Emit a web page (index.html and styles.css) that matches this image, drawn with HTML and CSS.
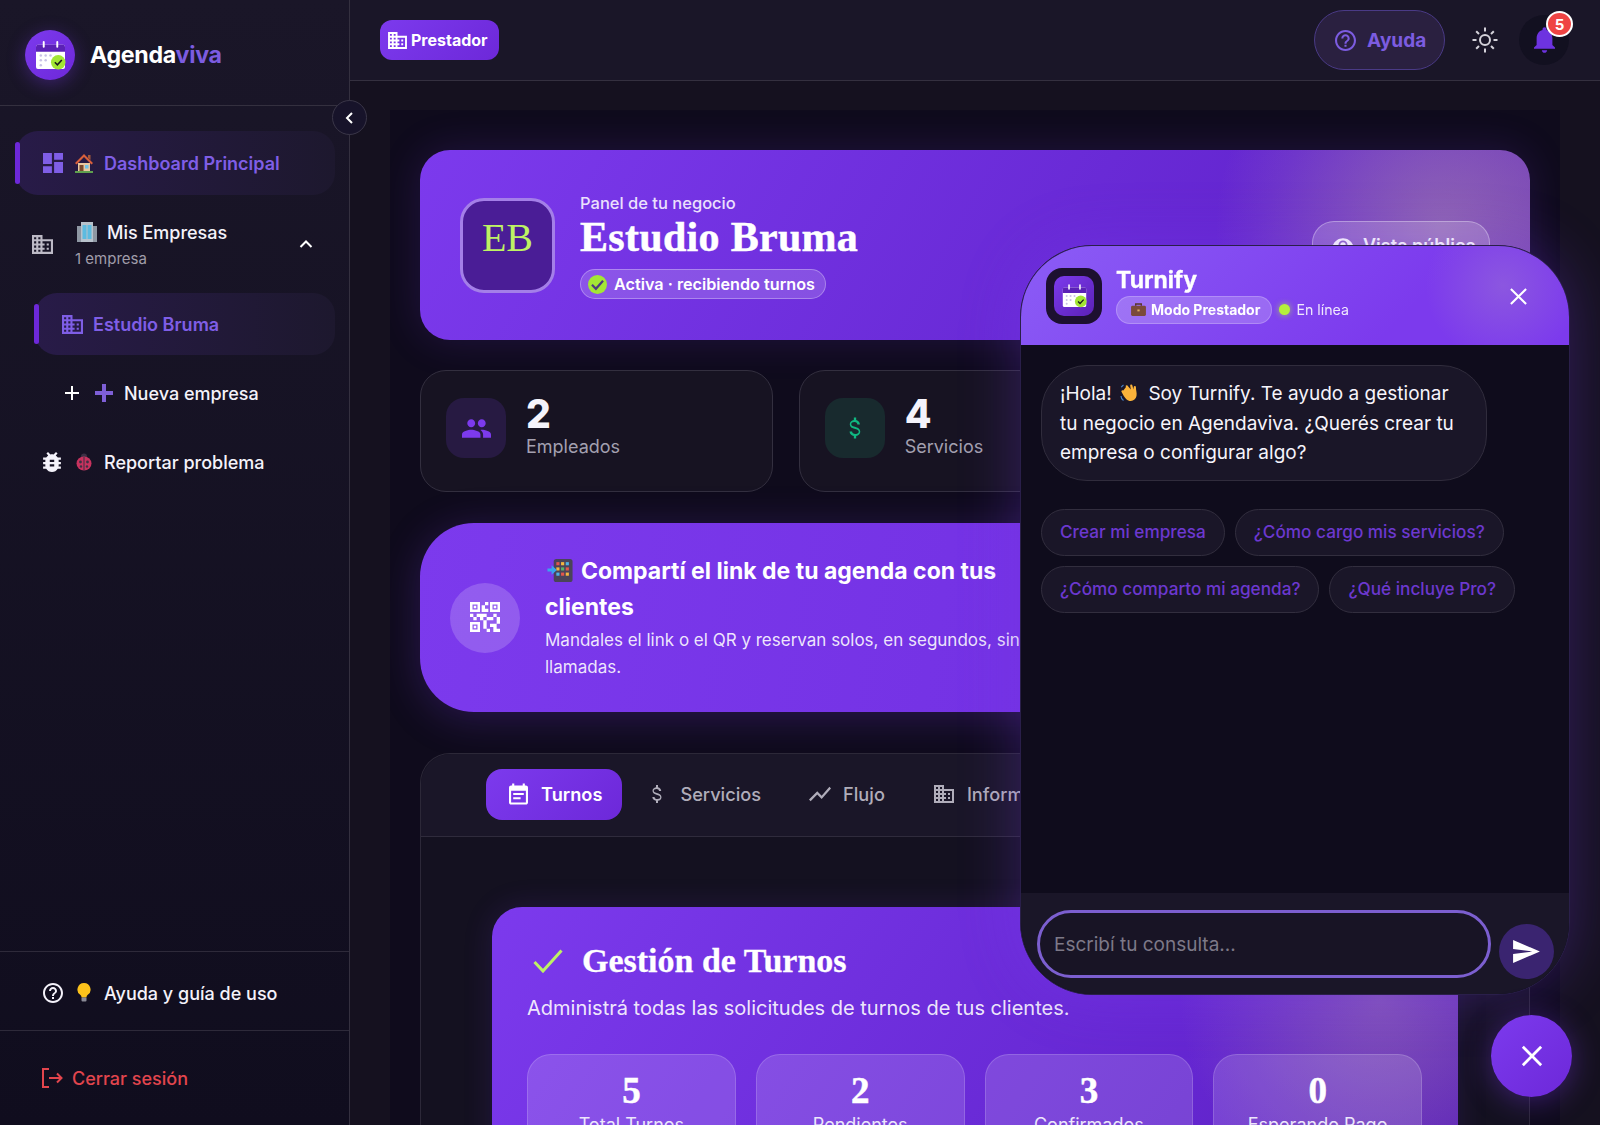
FILE: index.html
```html
<!DOCTYPE html>
<html lang="es">
<head>
<meta charset="utf-8">
<title>Agendaviva</title>
<link rel="stylesheet" href="styles.css">
</head>
<body>
<svg class="defs" width="0" height="0" aria-hidden="true">
  <symbol id="i-logo" viewBox="0 0 32 30">
    <rect x="1" y="4" width="30" height="25" rx="2" fill="#fff"/>
    <path d="M1 6a2 2 0 0 1 2-2h26a2 2 0 0 1 2 2v5H1z" fill="#5b21b6"/>
    <rect x="8" y="0" width="2" height="7" rx="1" fill="#fff"/>
    <rect x="22" y="0" width="2" height="7" rx="1" fill="#fff"/>
    <g fill="#c9c2e6"><circle cx="6" cy="15" r="1.3"/><circle cx="11" cy="15" r="1.3"/><circle cx="16" cy="15" r="1.3"/><circle cx="6" cy="20" r="1.3"/><circle cx="11" cy="20" r="1.3"/><circle cx="6" cy="25" r="1.3"/></g>
    <circle cx="24" cy="22" r="7.5" fill="#a3e635"/>
    <path d="M20.5 22l2.6 2.6 4.6-5" fill="none" stroke="#1a1a1a" stroke-width="1.6"/>
  </symbol>
  <symbol id="i-dash" viewBox="3 3 18 18"><path d="M3 13h8V3H3v10zm0 8h8v-6H3v6zm10 0h8V11h-8v10zm0-18v6h8V3h-8z"/></symbol>
  <symbol id="i-domain" viewBox="2 3 20 18"><path d="M12 7V3H2v18h20V7H12zM6 19H4v-2h2v2zm0-4H4v-2h2v2zm0-4H4V9h2v2zm0-4H4V5h2v2zm4 12H8v-2h2v2zm0-4H8v-2h2v2zm0-4H8V9h2v2zm0-4H8V5h2v2zm10 12h-8v-2h2v-2h-2v-2h2v-2h-2V9h8v10zm-2-8h-2v2h2v-2zm0 4h-2v2h2v-2z"/></symbol>
  <symbol id="i-bug" viewBox="4 3 16 18"><path d="M20 8h-2.81c-.45-.78-1.07-1.45-1.82-1.96L17 4.41 15.59 3l-2.17 2.17C12.96 5.06 12.49 5 12 5c-.49 0-.96.06-1.41.17L8.41 3 7 4.41l1.62 1.63C7.88 6.55 7.26 7.22 6.81 8H4v2h2.09c-.05.33-.09.66-.09 1v1H4v2h2v1c0 .34.04.67.09 1H4v2h2.81c1.04 1.79 2.97 3 5.19 3s4.15-1.21 5.19-3H20v-2h-2.09c.05-.33.09-.66.09-1v-1h2v-2h-2v-1c0-.34-.04-.67-.09-1H20V8zm-6 8h-4v-2h4v2zm0-4h-4v-2h4v2z"/></symbol>
  <symbol id="i-help" viewBox="2 2 20 20"><path d="M11 18h2v-2h-2v2zm1-16C6.48 2 2 6.48 2 12s4.48 10 10 10 10-4.48 10-10S17.52 2 12 2zm0 18c-4.41 0-8-3.59-8-8s3.59-8 8-8 8 3.59 8 8-3.59 8-8 8zm0-14c-2.21 0-4 1.79-4 4h2c0-1.1.9-2 2-2s2 .9 2 2c0 2-3 1.75-3 5h2c0-2.25 3-2.5 3-5 0-2.21-1.79-4-4-4z"/></symbol>
  <symbol id="i-group" viewBox="1 5 22 14"><path d="M16 11c1.66 0 2.99-1.34 2.99-3S17.66 5 16 5c-1.66 0-3 1.34-3 3s1.34 3 3 3zm-8 0c1.66 0 2.99-1.34 2.99-3S9.66 5 8 5C6.34 5 5 6.34 5 8s1.34 3 3 3zm0 2c-2.33 0-7 1.17-7 3.5V19h14v-2.5c0-2.33-4.67-3.5-7-3.5zm8 0c-.29 0-.62.02-.97.05 1.16.84 1.97 1.97 1.97 3.45V19h6v-2.5c0-2.33-4.67-3.5-7-3.5z"/></symbol>
  <symbol id="i-money" viewBox="6 3 12 18"><path d="M11.8 10.9c-2.27-.59-3-1.2-3-2.15 0-1.09 1.01-1.85 2.7-1.85 1.78 0 2.44.85 2.5 2.1h2.21c-.07-1.72-1.12-3.3-3.21-3.81V3h-2v2.16c-1.94.42-3.5 1.68-3.5 3.61 0 2.31 1.91 3.46 4.7 4.13 2.5.6 3 1.48 3 2.41 0 .69-.49 1.79-2.7 1.79-2.06 0-2.87-.92-2.98-2.1h-2.2c.12 2.19 1.76 3.42 3.68 3.83V21h2v-2.15c1.95-.37 3.5-1.5 3.5-3.55 0-2.84-2.43-3.81-4.7-4.4z"/></symbol>
  <symbol id="i-event" viewBox="3 1 18 20"><path d="M17 10H7v2h10v-2zm2-7h-1V1h-2v2H8V1H6v2H5c-1.11 0-1.99.9-1.99 2L3 19c0 1.1.89 2 2 2h14c1.1 0 2-.9 2-2V5c0-1.1-.9-2-2-2zm0 16H5V8h14v11zm-5-5H7v2h7v-2z"/></symbol>
  <symbol id="i-chart" viewBox="2 5 20 14"><path d="M3.5 18.49l6-6.01 4 4L22 6.92l-1.41-1.41-7.09 7.97-4-4L2 16.99z"/></symbol>
  <symbol id="i-qr" viewBox="3 3 18 18"><path d="M15 21h-2v-2h2v2zm-2-7h-2v5h2v-5zm8-2h-2v4h2v-4zm-2-2h-2v2h2v-2zM7 12H5v2h2v-2zm-2-2H3v2h2v-2zm7-5h2V3h-2v2zm-7.5-.5v3h3v-3h-3zM9 9H3V3h6v6zm-4.5 7.5v3h3v-3h-3zM9 21H3v-6h6v6zm7.5-16.5v3h3v-3h-3zM21 9h-6V3h6v6zm-2 10v-3h-4v2h2v3h4v-2h-2zm-2-7h-4v2h4v-2zm-4-2H7v2h2v2h2v-2h2v-2zm1-1V7h-2V5h-2v4h4zM6.75 5.25h-1.5v1.5h1.5v-1.5zm0 12h-1.5v1.5h1.5v-1.5zm12-12h-1.5v1.5h1.5v-1.5z"/></symbol>
  <symbol id="i-bell" viewBox="4 2.5 16 19.5"><path d="M12 22c1.1 0 2-.9 2-2h-4c0 1.1.9 2 2 2zm6-6v-5c0-3.07-1.63-5.64-4.5-6.32V4c0-.83-.67-1.5-1.5-1.5s-1.5.67-1.5 1.5v.68C7.64 5.36 6 7.92 6 11v5l-2 2v1h16v-1l-2-2z"/></symbol>
  <symbol id="i-send" viewBox="2 3 21 18"><path d="M2.01 21L23 12 2.01 3 2 10l15 2-15 2z"/></symbol>
  <symbol id="i-eye" viewBox="1 4.5 22 15"><path d="M12 4.5C7 4.5 2.73 7.61 1 12c1.73 4.39 6 7.5 11 7.5s9.27-3.11 11-7.5c-1.73-4.39-6-7.5-11-7.5zM12 17a5 5 0 1 1 0-10 5 5 0 0 1 0 10zm0-8a3 3 0 1 0 0 6 3 3 0 0 0 0-6z"/></symbol>
  <symbol id="e-house" viewBox="0 0 20 20"><path d="M4 10h12v9H4z" fill="#e8c9a0"/><path d="M10 1L1 10l1.500 1.500L10 4l7.500 7.500L19 10z" fill="#d9603b"/><path d="M14 2h2.500v5L14 5z" fill="#a1583a"/><rect x="5.500" y="12" width="4" height="7" fill="#7a4a2c"/><rect x="11" y="12" width="3.500" height="3.500" fill="#6fc3e6"/><rect x="1" y="18" width="18" height="2" fill="#5fa04e"/></symbol>
  <symbol id="e-office" viewBox="0 0 20 20"><rect x="0" y="4" width="20" height="16" fill="#8e97a3"/><rect x="4" y="0" width="12" height="20" fill="#b8c2cc"/><g fill="#5dbbe0"><rect x="5.500" y="3" width="4" height="14"/><rect x="10.500" y="3" width="4" height="14"/></g></symbol>
  <symbol id="e-plus" viewBox="0 0 18 18"><path d="M7 0h4v7h7v4h-7v7H7v-7H0V7h7z" fill="#7e5fd6"/></symbol>
  <symbol id="e-bug" viewBox="0 0 18 18"><circle cx="9" cy="3.500" r="3" fill="#3c3044"/><ellipse cx="9" cy="10.500" rx="7.500" ry="7" fill="#c8325e"/><path d="M9 4v13.500" stroke="#3c3044" stroke-width="1"/><circle cx="5.500" cy="9" r="1.400" fill="#3c3044"/><circle cx="12.500" cy="9" r="1.400" fill="#3c3044"/><circle cx="6" cy="13.500" r="1.200" fill="#3c3044"/><circle cx="12" cy="13.500" r="1.200" fill="#3c3044"/></symbol>
  <symbol id="e-bulb" viewBox="0 0 14 20"><path d="M7 0a6.500 6.500 0 0 0-3.500 12c.7.6 1 1.500 1 2.500h5c0-1 .3-1.900 1-2.500A6.500 6.500 0 0 0 7 0z" fill="#fcc21b"/><rect x="4.500" y="14.500" width="5" height="4" rx="1" fill="#8a8a96"/></symbol>
  <symbol id="e-phone" viewBox="0 0 24 22"><rect x="6" y="0" width="18" height="22" rx="2.500" fill="#4a4458"/><g><rect x="8.500" y="3" width="3" height="3" fill="#e2574c"/><rect x="13" y="3" width="3" height="3" fill="#f4b73f"/><rect x="17.500" y="3" width="3" height="3" fill="#4fb2e5"/><rect x="8.500" y="8" width="3" height="3" fill="#f4b73f"/><rect x="13" y="8" width="3" height="3" fill="#58b368"/><rect x="17.500" y="8" width="3" height="3" fill="#e2574c"/><rect x="8.500" y="13" width="3" height="3" fill="#4fb2e5"/><rect x="13" y="13" width="3" height="3" fill="#e2574c"/><rect x="17.500" y="13" width="3" height="3" fill="#f4b73f"/></g><path d="M0 9h4V6l5 4.500L4 15v-3H0z" fill="#39a5ee"/></symbol>
  <symbol id="e-wave" viewBox="0 0 20 20"><path d="M6 4c-1-1.300.6-2.400 1.600-1.300l3.200 3.700-.6-3.600c-.2-1.500 1.900-1.800 2.200-.3l1 4 .3-2.600c.2-1.400 2.200-1.200 2.200.2 0 3.500 1.200 6 .6 9-.7 3.400-3.700 5.600-7 4.800-2.500-.6-4-2.700-5.700-5L1.600 8.900C.8 7.800 2.300 6.600 3.300 7.500z" fill="#fbb33a"/><path d="M1 13c0 2 1 3.500 2.500 4.500M3.500 2C2.500 2.600 1.800 3.300 1.300 4.300" fill="none" stroke="#4680c8" stroke-width="1.200"/></symbol>
  <symbol id="e-case" viewBox="0 0 16 14"><rect x="0" y="3" width="16" height="11" rx="1.500" fill="#7a4a3a"/><path d="M5 3V1h6v2" fill="none" stroke="#5a3428" stroke-width="1.500"/><rect x="6.800" y="7" width="2.400" height="2" fill="#e0b060"/></symbol>
</svg>

<div class="app">
  <aside class="sidebar">
    <div class="brand">
      <span class="brand-mark"><svg class="brand-cal"><use href="#i-logo"/></svg></span>
      <span class="brand-name">Agenda<span class="brand-accent">viva</span></span>
    </div>
    <button class="collapse" aria-label="Contraer"><svg viewBox="0 0 14 14" class="collapse-icon"><path d="M9 2L4 7l5 5"/></svg></button>
    <nav class="nav">
      <a class="nav-item active">
        <svg class="ic ic-20"><use href="#i-dash"/></svg>
        <svg class="em"><use href="#e-house"/></svg>
        <span>Dashboard Principal</span>
      </a>
      <div class="nav-group">
        <svg class="ic ic-group"><use href="#i-domain"/></svg>
        <div class="group-text">
          <div class="group-title"><svg class="em"><use href="#e-office"/></svg><span>Mis Empresas</span></div>
          <div class="group-sub">1 empresa</div>
        </div>
        <svg viewBox="0 0 14 10" class="chev"><path d="M1.500 8L7 2.500 12.500 8"/></svg>
      </div>
      <a class="nav-item sub active">
        <svg class="ic ic-domain"><use href="#i-domain"/></svg>
        <span>Estudio Bruma</span>
      </a>
      <a class="nav-item add">
        <svg viewBox="0 0 16 16" class="plus"><path d="M8 1v14M1 8h14"/></svg>
        <svg class="em em-plus"><use href="#e-plus"/></svg>
        <span>Nueva empresa</span>
      </a>
      <a class="nav-item report">
        <svg class="ic ic-bug"><use href="#i-bug"/></svg>
        <svg class="em"><use href="#e-bug"/></svg>
        <span>Reportar problema</span>
      </a>
    </nav>
    <div class="side-foot">
      <a class="nav-item foot-help">
        <svg class="ic ic-20"><use href="#i-help"/></svg>
        <svg class="em"><use href="#e-bulb"/></svg>
        <span>Ayuda y guía de uso</span>
      </a>
      <a class="logout">
        <svg viewBox="0 0 22 22" class="logout-icon"><path d="M8 2H2v18h6M8 11h12.500M16 6.500l4.500 4.500-4.500 4.500"/></svg>
        <span>Cerrar sesión</span>
      </a>
    </div>
  </aside>

  <main class="main">
    <header class="topbar">
      <span class="role"><svg class="ic ic-role"><use href="#i-domain"/></svg>Prestador</span>
      <div class="top-actions">
        <button class="help-pill"><svg class="ic ic-help"><use href="#i-help"/></svg>Ayuda</button>
        <button class="sun" aria-label="Tema">
          <svg viewBox="0 0 28 28" class="sun-icon"><circle cx="14" cy="14" r="5"/><path d="M14 1.500v4M14 22.500v4M1.500 14h4M22.500 14h4M5.200 5.200l2.800 2.800M20 20l2.800 2.800M5.200 22.800L8 20M20 8l2.800-2.800"/></svg>
        </button>
        <button class="bell" aria-label="Notificaciones">
          <svg class="ic ic-bell"><use href="#i-bell"/></svg>
          <span class="badge">5</span>
        </button>
      </div>
    </header>

    <div class="content">
      <div class="inner">
        <section class="hero">
          <div class="hero-left">
            <div class="avatar">EB</div>
            <div class="hero-text">
              <div class="hero-kicker">Panel de tu negocio</div>
              <h1 class="hero-title">Estudio Bruma</h1>
              <span class="status">
                <span class="status-check"><svg viewBox="0 0 12 12"><path d="M2.500 6.200L5 8.700l4.500-5"/></svg></span>
                Activa · recibiendo turnos
              </span>
            </div>
          </div>
          <button class="public"><svg class="ic ic-eye"><use href="#i-eye"/></svg>Vista pública</button>
        </section>

        <section class="stats">
          <div class="stat">
            <span class="stat-icon violet"><svg class="ic ic-people"><use href="#i-group"/></svg></span>
            <div><div class="stat-num">2</div><div class="stat-label">Empleados</div></div>
          </div>
          <div class="stat">
            <span class="stat-icon green"><svg class="ic ic-money"><use href="#i-money"/></svg></span>
            <div><div class="stat-num">4</div><div class="stat-label">Servicios</div></div>
          </div>
          <div class="stat"></div>
        </section>

        <section class="share">
          <span class="qr"><svg class="ic ic-qr"><use href="#i-qr"/></svg></span>
          <div class="share-text">
            <h2 class="share-title"><svg class="em-phone"><use href="#e-phone"/></svg>Compartí el link de tu agenda con tus clientes</h2>
            <p class="share-sub">Mandales el link o el QR y reservan solos, en segundos, sin llamadas.</p>
          </div>
        </section>

        <section class="panel">
          <div class="tabs">
            <a class="tab on"><svg class="ic ic-tab-event"><use href="#i-event"/></svg>Turnos</a>
            <a class="tab tab-money"><svg class="ic ic-tab-money"><use href="#i-money"/></svg>Servicios</a>
            <a class="tab"><svg class="ic ic-tab"><use href="#i-chart"/></svg>Flujo</a>
            <a class="tab"><svg class="ic ic-tab"><use href="#i-domain"/></svg>Informes</a>
          </div>
          <div class="panel-body">
            <div class="manage">
              <div class="manage-head">
                <svg viewBox="0 0 30 24" class="manage-check"><path d="M1.500 13l8.500 9L28.500 1.500"/></svg>
                <h2 class="manage-title">Gestión de Turnos</h2>
              </div>
              <p class="manage-sub">Administrá todas las solicitudes de turnos de tus clientes.</p>
              <div class="mini-row">
                <div class="mini"><div class="mini-num">5</div><div class="mini-label">Total Turnos</div></div>
                <div class="mini"><div class="mini-num">2</div><div class="mini-label">Pendientes</div></div>
                <div class="mini"><div class="mini-num">3</div><div class="mini-label">Confirmados</div></div>
                <div class="mini"><div class="mini-num">0</div><div class="mini-label">Esperando Pago</div></div>
              </div>
            </div>
          </div>
        </section>
      </div>
    </div>
  </main>
</div>

<aside class="chat">
  <header class="chat-head">
    <span class="chat-logo"><span class="chat-logo-in"><svg class="chat-cal"><use href="#i-logo"/></svg></span></span>
    <div class="chat-id">
      <div class="chat-name">Turnify</div>
      <div class="chat-meta">
        <span class="mode"><svg class="em-case"><use href="#e-case"/></svg>Modo Prestador</span>
        <span class="dot"></span>
        <span class="online">En línea</span>
      </div>
    </div>
    <svg viewBox="0 0 20 20" class="chat-close"><path d="M2 2l16 16M18 2L2 18"/></svg>
  </header>
  <div class="chat-body">
    <div class="bubble">¡Hola! <svg class="em-wave"><use href="#e-wave"/></svg> Soy Turnify. Te ayudo a gestionar tu negocio en Agendaviva. ¿Querés crear tu empresa o configurar algo?</div>
    <div class="chips">
      <button class="chip">Crear mi empresa</button>
      <button class="chip">¿Cómo cargo mis servicios?</button>
      <button class="chip">¿Cómo comparto mi agenda?</button>
      <button class="chip">¿Qué incluye Pro?</button>
    </div>
  </div>
  <footer class="chat-foot">
    <div class="chat-input">Escribí tu consulta...</div>
    <button class="chat-send" aria-label="Enviar"><svg class="ic ic-send"><use href="#i-send"/></svg></button>
  </footer>
</aside>
<button class="fab" aria-label="Cerrar"><svg viewBox="0 0 24 24" class="fab-x"><path d="M2 2l20 20M22 2L2 22"/></svg></button>
</body>
</html>
```

FILE: styles.css
```css
* { box-sizing: border-box; }
html, body { margin: 0; height: 1125px; overflow: hidden; }
body { font-family: Inter, "Noto Sans", sans-serif; background: #120e20; color: #f4f2fa; }
button { font: inherit; color: inherit; border: 0; background: none; padding: 0; }
h1, h2, p { margin: 0; }
.defs { position: absolute; }
.ic { fill: currentColor; display: block; flex: none; }
.em { width: 20px; height: 20px; flex: none; display: block; }

.app { display: flex; height: 1125px; }

/* Sidebar */
.sidebar { position: relative; width: 350px; flex: none; display: flex; flex-direction: column; border-right: 1px solid #34303f; background: linear-gradient(180deg, #1a1628, #100d1e); }
.brand { height: 106px; flex: none; display: flex; align-items: center; gap: 15px; padding: 5px 25px 0; border-bottom: 1px solid #34303f; }
.brand-mark { width: 50px; height: 50px; border-radius: 50%; background: linear-gradient(135deg, #7c3aed, #6d28d9); display: flex; align-items: center; justify-content: center; box-shadow: 0 4px 18px rgba(124,58,237,.35); }
.brand-cal { width: 31px; height: 29px; }
.brand-name { font-size: 23.200px; font-weight: 700; letter-spacing: -.3px; color: #fff; }
.brand-accent { color: #7c5ce0; }
.collapse { position: absolute; left: 332px; top: 100px; width: 35px; height: 35px; border-radius: 50%; background: #17132a; border: 1px solid #3a3648; display: flex; align-items: center; justify-content: center; z-index: 2; }
.collapse-icon { width: 14px; height: 14px; fill: none; stroke: #fff; stroke-width: 2; }

.nav { padding: 25px 0 0 16px; display: flex; flex-direction: column; gap: 7px; }
.nav-item { position: relative; display: flex; align-items: center; height: 62px; width: 319px; padding-left: 27px; gap: 11px; font-size: 18px; font-weight: 500; color: #f4f2fa; border-radius: 22px; }
.nav-item > span { margin-left: -1px; }
.nav-item.active { height: 64px; color: #7f5ee6; font-weight: 600; background: linear-gradient(90deg, #281b48, #1d182e); }
.nav-item.active::before { content: ""; position: absolute; left: -1px; top: 11px; bottom: 11px; width: 5px; border-radius: 3px; background: #6d28d9; }
.ic-20 { width: 20px; height: 20px; }
.nav-group { display: flex; align-items: center; height: 84px; padding-left: 16px; width: 319px; }
.ic-group { width: 21px; height: 19px; color: #bdbac6; }
.group-text { margin-left: 22px; flex: 1; }
.group-title { display: flex; align-items: center; gap: 10px; font-size: 18px; font-weight: 500; margin-left: 2px; padding-top: 1px; }
.group-sub { font-size: 15px; color: #a09daa; margin-top: 6px; }
.chev { width: 14px; height: 10px; fill: none; stroke: #fff; stroke-width: 2; margin-right: 22px; }
.nav-item.sub { margin-left: 19px; width: 300px; height: 62px; padding-left: 27px; font-weight: 600; gap: 11px; }
.ic-domain { width: 21px; height: 19px; }
.nav-item.add { padding-left: 48px; gap: 15px; }
.plus { width: 16px; height: 16px; fill: none; stroke: #fff; stroke-width: 2; }
.em-plus { width: 18px; height: 18px; margin-right: -3px; }
.nav-item.report { padding-left: 26px; gap: 12px; }
.ic-bug { width: 18px; height: 20px; margin-right: 2px; margin-left: 1px; }
.report .em { width: 18px; margin-right: 0; }
.side-foot { margin-top: auto; }
.foot-help { width: auto; height: 80px; padding: 4px 0 0 43px; border-radius: 0; border-top: 1px solid #2e2a3a; border-bottom: 1px solid #2e2a3a; }
.logout { display: flex; align-items: center; height: 94px; padding: 0 0 0 41px; gap: 9px; font-size: 18px; font-weight: 500; color: #e2454d; }
.logout-icon { width: 22px; height: 22px; fill: none; stroke: currentColor; stroke-width: 2; }

/* Main */
.main { flex: 1; min-width: 0; display: flex; flex-direction: column; }
.topbar { height: 81px; flex: none; display: flex; align-items: center; justify-content: space-between; padding: 0 31px 0 30px; background: #1a1628; border-bottom: 1px solid #34303f; }
.role { display: flex; align-items: center; gap: 4px; height: 40px; padding: 0 11px 0 8px; border-radius: 12px; background: linear-gradient(135deg, #7c3aed, #6d28d9); font-size: 16px; font-weight: 700; color: #fff; }
.ic-role { width: 19px; height: 17px; }
.top-actions { display: flex; align-items: center; }
.help-pill { display: flex; align-items: center; gap: 11px; height: 60px; width: 131px; padding-left: 20px; border-radius: 30px; background: #2a2040; border: 1px solid #4a3a86; color: #7c5ce0; font-size: 19px; font-weight: 700; }
.ic-help { width: 21px; height: 21px; }
.sun { margin-left: 26px; width: 28px; height: 28px; }
.sun-icon { display: block; width: 28px; height: 28px; fill: none; stroke: #d4d2da; stroke-width: 2; }
.bell { position: relative; margin-left: 20px; width: 50px; height: 50px; border-radius: 50%; background: #121020; display: flex; align-items: center; justify-content: center; color: #6d33e0; }
.ic-bell { width: 21px; height: 26px; }
.badge { position: absolute; left: 27px; top: -4px; width: 27px; height: 26px; border-radius: 50%; background: #ef4444; border: 2px solid #fff; color: #fff; font-size: 15px; font-weight: 700; display: flex; align-items: center; justify-content: center; }

.content { flex: 1; min-height: 0; padding: 29px 40px 0; background: #15111f; }
.inner { height: 100%; overflow: hidden; padding: 40px 30px 0; background: #0f0b1c; display: flex; flex-direction: column; }

/* Hero */
.hero { height: 190px; flex: none; display: flex; align-items: center; justify-content: space-between; padding: 0 40px; border-radius: 30px; background: radial-gradient(circle at 92% 42%, rgba(190,170,160,.45), rgba(190,170,160,0) 22%), linear-gradient(120deg, #7c3aed, #6426d0 72%, #6d33b8); box-shadow: 0 0 40px rgba(124,58,237,.18); }
.hero-left { display: flex; align-items: center; gap: 25px; }
.avatar { width: 95px; height: 95px; padding-bottom: 15px; border-radius: 24px; background: #4a1d96; border: 3px solid #a47fe8; color: #bef264; display: flex; align-items: center; justify-content: center; font: 400 40px "Liberation Serif", serif; }
.hero-text { padding-top: 2px; }
.hero-kicker { font-size: 16.500px; font-weight: 500; color: #ebe0fd; }
.hero-title { font: 700 42px/46px "Liberation Serif", serif; color: #fff; margin-top: 1px; letter-spacing: .3px; -webkit-text-stroke: .5px #fff; }
.status { display: inline-flex; align-items: center; gap: 7px; height: 30px; margin-top: 9px; padding: 0 10px 0 7px; border-radius: 15px; background: rgba(255,255,255,.16); border: 1px solid rgba(255,255,255,.3); font-size: 16.200px; font-weight: 600; color: #fff; }
.status-check { width: 19px; height: 19px; border-radius: 50%; background: #a3e635; display: flex; }
.status-check svg { width: 19px; height: 19px; fill: none; stroke: #4b3a80; stroke-width: 1.400; }
.public { display: flex; align-items: center; gap: 10px; height: 48px; padding: 0 20px; width: 178px; white-space: nowrap; border-radius: 22px; background: rgba(255,255,255,.18); border: 1px solid rgba(255,255,255,.35); color: #fff; font-size: 18px; font-weight: 600; }
.ic-eye { width: 20px; height: 14px; }

/* Stats */
.stats { display: grid; grid-template-columns: repeat(3, 1fr); gap: 26px; margin-top: 30px; flex: none; }
.stat { height: 122px; display: flex; gap: 20px; padding: 27px 25px; border-radius: 26px; background: #171322; border: 1px solid #332f3f; }
.stat-icon { width: 60px; height: 60px; border-radius: 18px; display: flex; align-items: center; justify-content: center; flex: none; }
.violet { background: #271a42; color: #7c3aed; }
.green { background: #182a2e; color: #10b981; }
.ic-people { width: 29px; height: 19px; }
.ic-money { width: 14px; height: 26px; }
.stat-num { font-size: 39px; line-height: 39px; font-weight: 800; color: #f5f3fb; margin-top: -4px; }
.stat-label { font-size: 18px; color: #a3a0b0; margin-top: 3px; }

/* Share */
.share { height: 189px; flex: none; margin-top: 31px; display: flex; align-items: center; gap: 25px; padding-left: 30px; border-radius: 54px; background: linear-gradient(100deg, #7c3aed, #6d2bdc); box-shadow: 0 6px 40px rgba(124,58,237,.25); }
.qr { width: 70px; height: 70px; border-radius: 50%; background: rgba(255,255,255,.18); display: flex; align-items: center; justify-content: center; flex: none; color: #fff; }
.ic-qr { width: 30px; height: 30px; margin-bottom: 2px; }
.share-text { width: 490px; padding-bottom: 1px; }
.share-title { font-size: 23px; line-height: 36px; font-weight: 700; color: #fff; }
.em-phone { display: inline-block; width: 26px; height: 23px; vertical-align: -3px; margin: 0 8px 0 2px; }
.share-sub { font-size: 17px; line-height: 27.500px; color: rgba(255,255,255,.88); margin-top: 2px; }

/* Panel */
.panel { flex: none; margin-top: 41px; border: 1px solid #2c2838; border-bottom: 0; border-radius: 30px 30px 0 0; background: #141120; }
.tabs { height: 83px; display: flex; align-items: center; gap: 10px; padding: 0 0 2px 65px; background: #1a1628; border-bottom: 1px solid #2f2b3c; border-radius: 30px 30px 0 0; }
.tab { display: flex; align-items: center; gap: 12px; height: 51px; padding: 0 19px; font-size: 18.200px; font-weight: 500; color: #b0adba; border-radius: 16px; }
.tab.on { color: #fff; font-weight: 600; background: linear-gradient(135deg, #7c3aed, #6d28d9); padding: 0 20px 0 23px; gap: 13px; }
.tab-money { gap: 17px; }
.ic-tab-event { width: 19px; height: 22px; }
.ic-tab-money { width: 12px; height: 22px; }
.ic-tab { width: 22px; height: 18px; }
.panel-body { padding: 70px 71px 0; }
.manage { border-radius: 30px; padding: 33px 36px 30px 35px; background: radial-gradient(circle at 92% 30%, rgba(190,170,160,.35), rgba(190,170,160,0) 22%), linear-gradient(125deg, #7c3aed, #6426d0 70%, #5b21b6); box-shadow: 0 0 30px rgba(124,58,237,.15); }
.manage-head { display: flex; align-items: center; gap: 19px; padding-left: 6px; }
.manage-check { width: 30px; height: 24px; fill: none; stroke: #bef264; stroke-width: 3; }
.manage-title { font: 700 34px/42px "Liberation Serif", serif; color: #fff; -webkit-text-stroke: .3px #fff; }
.manage-sub { font-size: 20px; color: rgba(255,255,255,.9); margin-top: 14px; }
.mini-row { display: grid; grid-template-columns: repeat(4, 1fr); gap: 20px; margin-top: 34px; }
.mini { height: 130px; padding-top: 15px; text-align: center; border-radius: 24px; background: rgba(255,255,255,.14); border: 1px solid rgba(255,255,255,.16); }
.mini-num { font: 700 37px/42px "Liberation Serif", serif; color: #fff; -webkit-text-stroke: .5px #fff; }
.mini-label { font-size: 18px; color: #ece6fb; margin-top: 2px; }

/* Chat */
.chat { position: fixed; left: 1020px; top: 245px; width: 550px; height: 750px; z-index: 5; display: flex; flex-direction: column; border-radius: 72px; overflow: hidden; background: #0f0c1c; border: 1px solid #2a1f4a; box-shadow: 0 0 60px rgba(124,58,237,.3); }
.chat-head { height: 99px; flex: none; display: flex; align-items: center; padding: 0 41px 0 25px; background: radial-gradient(circle at 88% 40%, rgba(180,160,190,.28), rgba(180,160,190,0) 16%), linear-gradient(135deg, #8b5cf6, #7c3aed 70%); }
.chat-logo { width: 56px; height: 56px; border-radius: 16px; background: #1d1030; display: flex; align-items: center; justify-content: center; flex: none; }
.chat-logo-in { width: 40px; height: 40px; border-radius: 10px; background: linear-gradient(135deg, #7c3aed, #5b21b6); display: flex; align-items: center; justify-content: center; }
.chat-cal { width: 25px; height: 24px; }
.chat-id { margin-left: 14px; flex: 1; }
.chat-name { font-size: 23px; line-height: 26px; font-weight: 700; color: #fff; margin-top: -1px; -webkit-text-stroke: .3px #fff; }
.chat-meta { display: flex; align-items: center; margin-top: 3px; }
.mode { display: flex; align-items: center; gap: 5px; height: 28px; padding: 0 11px 0 14px; border-radius: 14px; background: rgba(255,255,255,.2); border: 1px solid rgba(255,255,255,.22); font-size: 14px; font-weight: 700; color: #fff; }
.em-case { width: 15px; height: 13px; }
.dot { width: 11px; height: 11px; border-radius: 50%; margin-left: 7px; background: #b5f03c; box-shadow: 0 0 6px rgba(181,240,60,.7); }
.online { font-size: 14.200px; color: rgba(255,255,255,.88); margin-left: 6px; }
.chat-close { width: 19px; height: 19px; fill: none; stroke: #fff; stroke-width: 2.200; margin-top: 1px; }
.chat-body { flex: 1; min-height: 0; padding: 20px 20px 0; background: #0f0c1c; }
.bubble { width: 446px; height: 116px; padding: 13px 18px; border-radius: 46px; background: #1a1628; border: 1px solid #302c3c; font-size: 19px; line-height: 29.500px; color: #f6f4fb; }
.em-wave { display: inline-block; width: 20px; height: 20px; vertical-align: -3px; margin: 0 3px; }
.chips { display: flex; flex-wrap: wrap; gap: 10px; margin-top: 28px; width: 495px; }
.chip { height: 47px; padding: 0 18px 2px; border-radius: 24px; background: #1a1628; border: 1px solid #322e3e; color: #6c38cf; font-size: 17.200px; font-weight: 500; }
.chat-foot { height: 101px; flex: none; display: flex; padding: 17px 15px 0 16px; gap: 8px; background: #1a1628; }
.chat-input { width: 454px; height: 68px; padding: 0 14px; border: 3px solid #7c5fd0; border-radius: 34px; display: flex; align-items: center; font-size: 19px; color: #7d7988; background: #181425; }
.chat-send { width: 55px; height: 55px; margin-top: 14px; border-radius: 50%; background: #3a2470; color: #fff; display: flex; align-items: center; justify-content: center; flex: none; }
.ic-send { width: 27px; height: 23px; }
.fab { position: fixed; left: 1491px; top: 1015px; width: 81px; height: 82px; border-radius: 50%; z-index: 6; background: linear-gradient(135deg, #7c3aed, #6d28d9); box-shadow: 0 4px 30px rgba(124,58,237,.4); display: flex; align-items: center; justify-content: center; }
.fab-x { width: 22px; height: 22px; fill: none; stroke: #fff; stroke-width: 3; }
```
